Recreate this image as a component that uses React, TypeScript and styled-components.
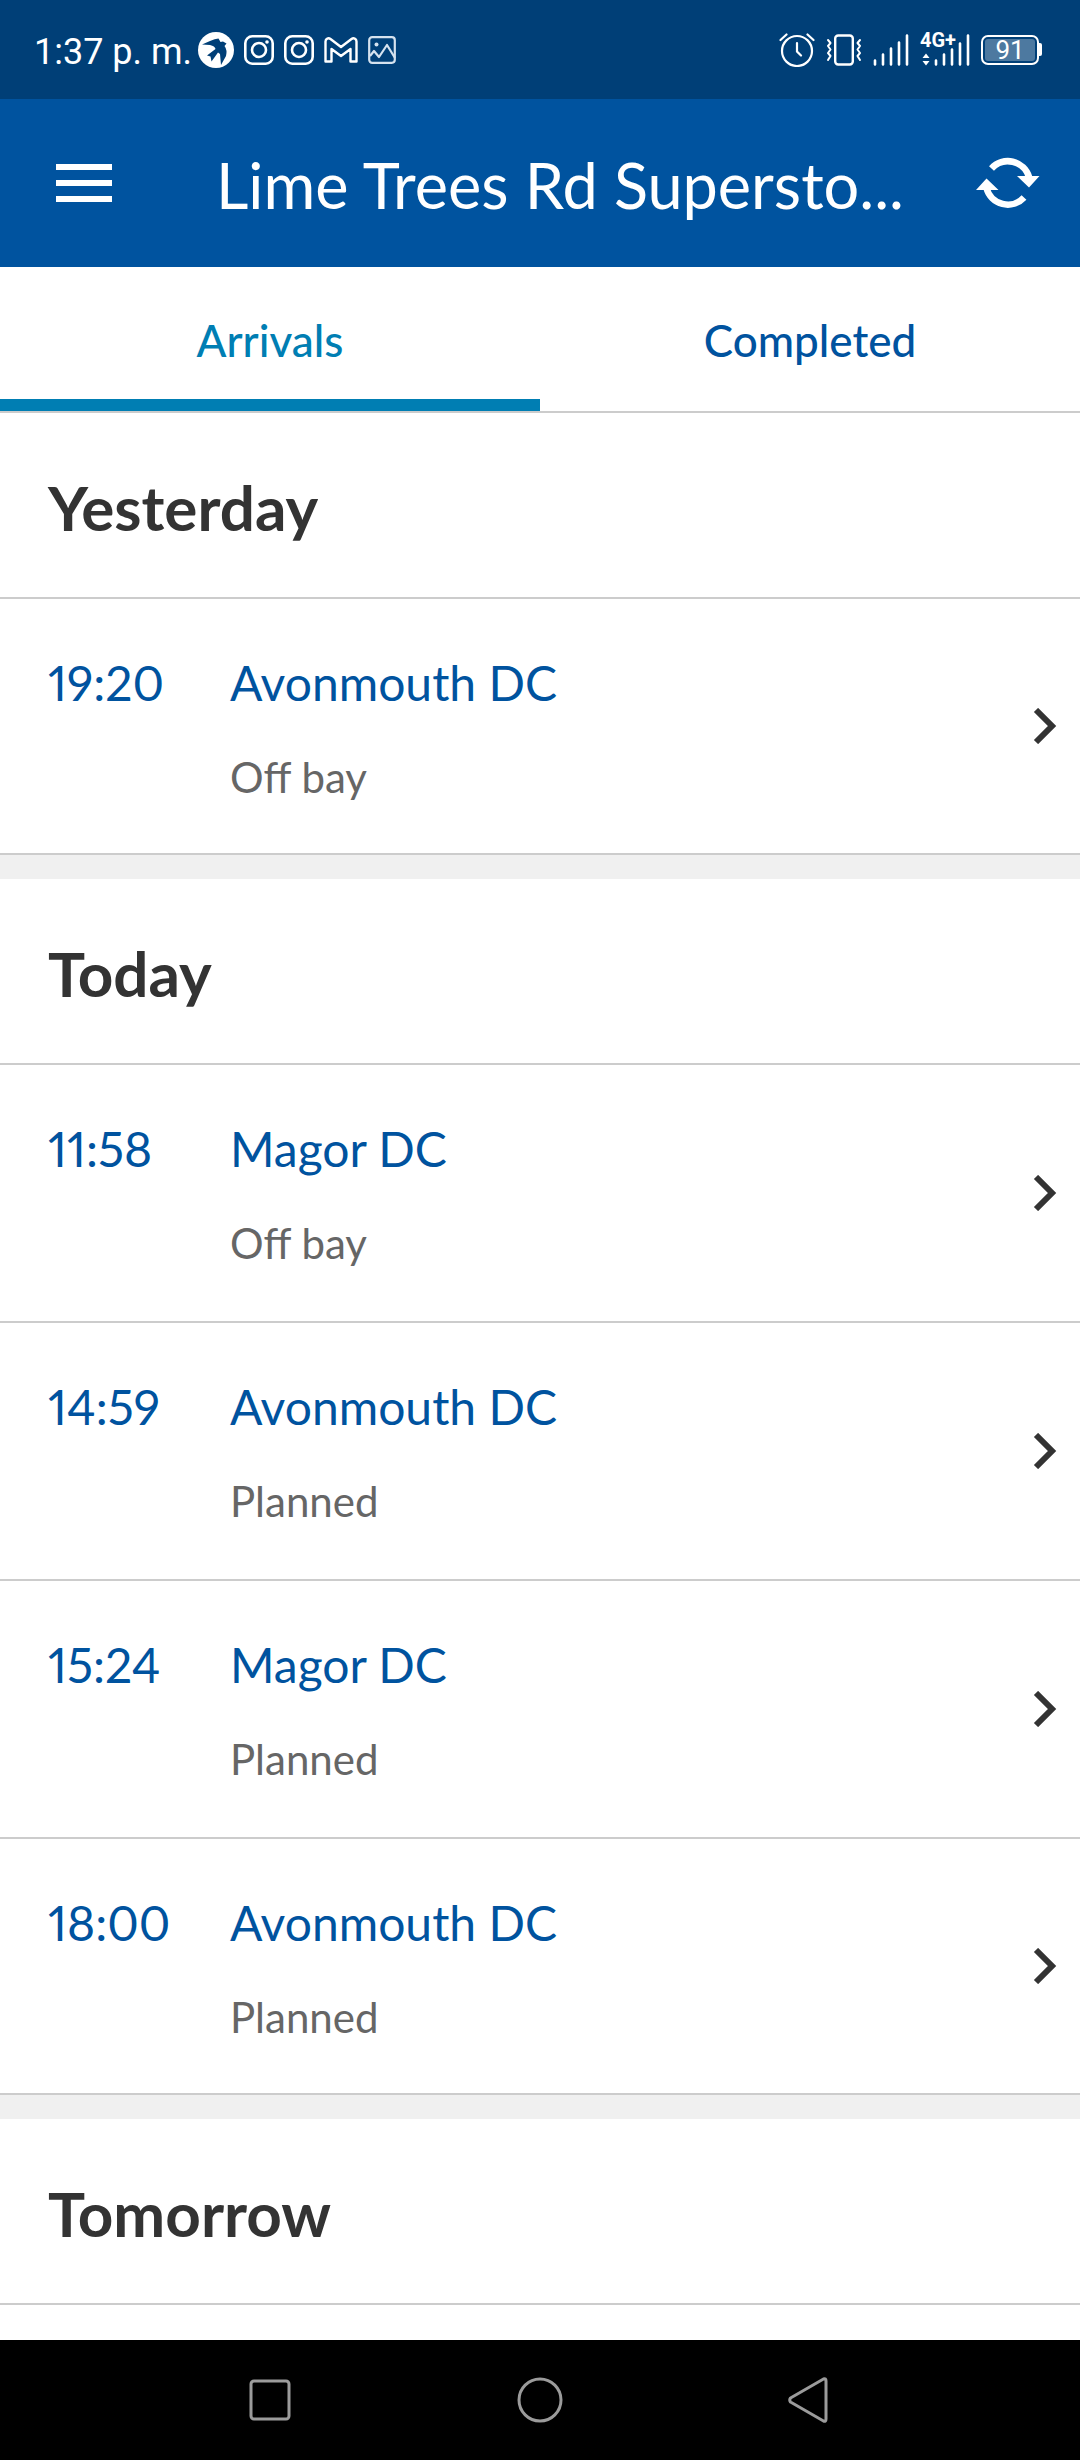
import React from 'react';
import styled, { createGlobalStyle } from 'styled-components';

const colors = {
  statusBar: '#003f77',
  brand: '#00539f',
  active: '#007eb3',
  ink: '#333333',
  muted: '#666666',
  line: '#cccccc',
  band: '#f0f0f0',
  navIcon: '#9b9b9b',
};

const GlobalStyle = createGlobalStyle`
  *, *::before, *::after { box-sizing: border-box; }
  body {
    margin: 0;
    background: #ffffff;
    font-family: Lato, "Liberation Sans", sans-serif;
  }
  svg { display: block; flex: none; }
`;

const Screen = styled.div`
  min-height: 100vh;
  display: flex;
  flex-direction: column;
  background: #ffffff;
`;

const StatusBar = styled.div`
  height: 99px;
  padding: 0 38px 0 34px;
  display: flex;
  align-items: center;
  justify-content: space-between;
  background: ${colors.statusBar};
  color: #ffffff;
  font-family: Roboto, sans-serif;
`;

const StatusGroup = styled.div<{ $gap: number }>`
  display: flex;
  align-items: center;
  gap: ${({ $gap }) => $gap}px;
`;

const Clock = styled.span`
  font-size: 36px;
  line-height: 42px;
  padding-top: 4px;
`;

const Network = styled.div`
  position: relative;
  display: flex;
  align-items: flex-end;
`;

const NetworkLabel = styled.span`
  position: absolute;
  left: 0;
  top: -4px;
  font-size: 20px;
  line-height: 20px;
  font-weight: 700;
`;

const Battery = styled.div`
  display: flex;
  align-items: center;
`;

const BatteryBody = styled.div`
  width: 58px;
  height: 30px;
  padding: 2px;
  border: 2px solid #ffffff;
  border-radius: 7px;
`;

const BatteryLevel = styled.div`
  height: 22px;
  border-radius: 3px;
  background: #4d79a0;
  font-size: 26px;
  line-height: 22px;
  text-align: center;
`;

const BatteryTip = styled.div`
  width: 3px;
  height: 13px;
  border-radius: 0 2px 2px 0;
  background: #ffffff;
`;

const AppBar = styled.header`
  height: 168px;
  padding: 0 40px 0 56px;
  display: flex;
  align-items: center;
  background: ${colors.brand};
  color: #ffffff;
`;

const IconButton = styled.button`
  padding: 0;
  border: 0;
  background: none;
  color: inherit;
`;

const Title = styled.h1`
  flex: 1;
  margin: 0;
  padding: 4px 32px 0 104px;
  font-size: 63px;
  line-height: 72px;
  font-weight: 400;
  white-space: nowrap;
`;

const Tabs = styled.div`
  display: flex;
  border-bottom: 2px solid ${colors.line};
`;

const Tab = styled.button<{ $active?: boolean }>`
  flex: 1;
  height: 144px;
  padding: 14px 0 0;
  border: 0;
  border-bottom: 12px solid ${({ $active }) => ($active ? colors.active : 'transparent')};
  background: none;
  color: ${({ $active }) => ($active ? colors.active : colors.brand)};
  font-family: inherit;
  font-size: 44px;
  line-height: 48px;
  font-weight: 500;
`;

const Content = styled.main`
  flex: 1;
`;

const Section = styled.section`
  & + & {
    border-top: 24px solid ${colors.band};
  }
`;

const SectionTitle = styled.h2`
  margin: 0;
  padding: 58px 48px 54px;
  border-bottom: 2px solid ${colors.line};
  color: ${colors.ink};
  font-size: 62px;
  line-height: 72px;
  font-weight: 700;
`;

const List = styled.ul`
  margin: 0;
  padding: 0;
  list-style: none;
`;

const Item = styled.li`
  height: 258px;
  border-bottom: 2px solid ${colors.line};
  &:last-child {
    height: 256px;
  }
`;

const RowLink = styled.a`
  height: 100%;
  padding: 0 23px 0 48px;
  display: grid;
  grid-template-columns: 182px 1fr auto;
  align-items: center;
  color: ${colors.brand};
  text-decoration: none;
  font-size: 48px;
  line-height: 60px;
`;

const Time = styled.span`
  align-self: start;
  padding-top: 54px;
  font-variant-numeric: proportional-nums;
`;

const Details = styled.span`
  align-self: start;
  padding-top: 54px;
  display: flex;
  flex-direction: column;
  gap: 36px;
`;

const Depot = styled.span`
  white-space: nowrap;
`;

const State = styled.span`
  color: ${colors.muted};
  font-size: 42px;
  line-height: 56px;
`;

const NavBar = styled.nav`
  height: 120px;
  padding: 0 12.5%;
  display: flex;
  background: #000000;
  color: ${colors.navIcon};
`;

const NavButton = styled(IconButton)`
  flex: 1;
  display: flex;
  align-items: center;
  justify-content: center;
`;

const BirdIcon = () => (
  <svg width="36" height="36" viewBox="0 0 36 36">
    <circle cx="18" cy="18" r="18" fill="#fff" />
    <path
      d="M4 12.5 12 9Q17 6.5 20.5 6.500L22.500 10 25 9.500 28.500 11.500 26.500 14Q29.500 18 28 24L23 33 22 22 20 20.500 13.500 29.500 12.500 24.500 9 23.500 17.500 17Q17 14 12 13Z"
      fill={colors.statusBar}
    />
  </svg>
);

const InstagramIcon = () => (
  <svg width="30" height="30" viewBox="0 0 30 30" fill="none" stroke="#fff" strokeWidth="2.6">
    <rect x="1.3" y="1.3" width="27.4" height="27.4" rx="7" />
    <circle cx="15" cy="15" r="7" />
    <circle cx="23" cy="7" r="1.8" fill="#fff" stroke="none" />
  </svg>
);

const MailIcon = () => (
  <svg width="34" height="26" viewBox="0 0 34 26" fill="none" stroke="#fff" strokeWidth="2.4" strokeLinejoin="round">
    <path d="M1.5 24.5V4.5C1.5 1.5 4.5.5 6.5 2L17 10 27.5 2C29.5.5 32.5 1.5 32.5 4.5V24.5H26.5V12L17 19 7.5 12V24.5Z" />
  </svg>
);

const PictureIcon = () => (
  <svg width="28" height="28" viewBox="0 0 28 28" fill="none" stroke="#d5e2ef" strokeWidth="2.2" strokeLinejoin="round">
    <rect x="1.2" y="1.2" width="25.6" height="25.6" rx="3" />
    <path d="M2 20 6 15 11 21 19 9 27 22" />
    <circle cx="8.5" cy="8.5" r="2" fill="#d5e2ef" stroke="none" />
  </svg>
);

const AlarmIcon = () => (
  <svg width="36" height="34" viewBox="0 0 36 34" fill="none" stroke="#fff" strokeWidth="2.2" strokeLinecap="round">
    <circle cx="18" cy="18" r="15" />
    <path d="M18 10V18.5L22 22.5M1.5 7 7.5 1.5M34.5 7 28.5 1.5" />
  </svg>
);

const VibrateIcon = () => (
  <svg width="36" height="32" viewBox="0 0 36 32" fill="none" stroke="#fff" strokeWidth="2.4" strokeLinejoin="round" strokeLinecap="round">
    <rect x="9.2" y="1.5" width="17.6" height="29" rx="3" />
    <path d="M2 6 4.5 9 2 12 4.5 15.5 2 19 4.5 22 2 26M34 6 31.5 9 34 12 31.5 15.5 34 19 31.5 22 34 26" strokeWidth="2" />
  </svg>
);

const SignalIcon = () => (
  <svg width="36" height="32" viewBox="0 0 36 32" stroke="#fff" strokeWidth="2.6" strokeLinecap="round">
    <path d="M2 26.5V30.5M10 20.5V30.5M18 14.5V30.5M26 8.5V30.5M34 1.5V30.5" />
  </svg>
);

const DataSignalIcon = () => (
  <svg width="50" height="32" viewBox="0 0 50 32" stroke="#fff" strokeWidth="2.6" strokeLinecap="round">
    <path d="M16 26.5V30.5M24 20.5V30.5M32 15.5V30.5M40 9.5V30.5M48 1.5V30.5" />
    <path d="M6 19.5 9.5 24H2.5ZM6 31.5 9.5 27H2.5Z" fill="#fff" stroke="none" />
  </svg>
);

const MenuIcon = () => (
  <svg width="56" height="38" viewBox="0 0 56 38" fill="currentColor">
    <path d="M0 0H56V6H0ZM0 16H56V22H0ZM0 32H56V38H0Z" />
  </svg>
);

const RefreshIcon = () => (
  <svg width="64" height="52" viewBox="0 0 64 52" fill="none" stroke="currentColor" strokeWidth="6.6">
    <path d="M15.5 11.5A22 22 0 0 1 53 20M48 40.5A22 22 0 0 1 10.5 31" />
    <path d="M41 19H63.5L53 30.5ZM22.5 33H0L10.5 21.5Z" fill="currentColor" stroke="none" />
  </svg>
);

const ChevronIcon = () => (
  <svg width="24" height="36" viewBox="0 0 24 36" fill="none" stroke={colors.ink} strokeWidth="6">
    <path d="M3 2 19 18 3 34" />
  </svg>
);

const SquareIcon = () => (
  <svg width="46" height="46" viewBox="0 0 46 46" fill="none" stroke="currentColor" strokeWidth="3">
    <rect x="4" y="4" width="38" height="38" rx="3" />
  </svg>
);

const CircleIcon = () => (
  <svg width="46" height="46" viewBox="0 0 46 46" fill="none" stroke="currentColor" strokeWidth="3">
    <circle cx="23" cy="23" r="21" />
  </svg>
);

const BackIcon = () => (
  <svg width="46" height="46" viewBox="0 0 46 46" fill="none" stroke="currentColor" strokeWidth="3" strokeLinejoin="round">
    <path d="M36.5 2Q39 1 39 4V42Q39 45 36.5 44L3.5 25Q2 23 3.5 21Z" />
  </svg>
);

interface Arrival {
  time: string;
  depot: string;
  state: string;
}

const days: { name: string; arrivals: Arrival[] }[] = [
  { name: 'Yesterday', arrivals: [{ time: '19:20', depot: 'Avonmouth DC', state: 'Off bay' }] },
  {
    name: 'Today',
    arrivals: [
      { time: '11:58', depot: 'Magor DC', state: 'Off bay' },
      { time: '14:59', depot: 'Avonmouth DC', state: 'Planned' },
      { time: '15:24', depot: 'Magor DC', state: 'Planned' },
      { time: '18:00', depot: 'Avonmouth DC', state: 'Planned' },
    ],
  },
  { name: 'Tomorrow', arrivals: [] },
];

const ArrivalRow = ({ time, depot, state }: Arrival) => (
  <Item>
    <RowLink href="#arrival">
      <Time>{time}</Time>
      <Details>
        <Depot>{depot}</Depot>
        <State>{state}</State>
      </Details>
      <ChevronIcon />
    </RowLink>
  </Item>
);

export default function App() {
  return (
    <Screen>
      <GlobalStyle />
      <StatusBar>
        <StatusGroup $gap={6}>
          <Clock>1:37 p. m.</Clock>
          <StatusGroup $gap={10}>
            <BirdIcon />
            <InstagramIcon />
            <InstagramIcon />
            <MailIcon />
            <PictureIcon />
          </StatusGroup>
        </StatusGroup>
        <StatusGroup $gap={11}>
          <AlarmIcon />
          <VibrateIcon />
          <SignalIcon />
          <Network>
            <NetworkLabel>4G+</NetworkLabel>
            <DataSignalIcon />
          </Network>
          <Battery>
            <BatteryBody>
              <BatteryLevel>91</BatteryLevel>
            </BatteryBody>
            <BatteryTip />
          </Battery>
        </StatusGroup>
      </StatusBar>
      <AppBar>
        <IconButton aria-label="Menu">
          <MenuIcon />
        </IconButton>
        <Title>Lime Trees Rd Supersto...</Title>
        <IconButton aria-label="Refresh">
          <RefreshIcon />
        </IconButton>
      </AppBar>
      <Tabs role="tablist">
        <Tab role="tab" aria-selected $active>
          Arrivals
        </Tab>
        <Tab role="tab" aria-selected={false}>
          Completed
        </Tab>
      </Tabs>
      <Content>
        {days.map((day) => (
          <Section key={day.name}>
            <SectionTitle>{day.name}</SectionTitle>
            <List>
              {day.arrivals.map((arrival) => (
                <ArrivalRow key={arrival.time} {...arrival} />
              ))}
            </List>
          </Section>
        ))}
      </Content>
      <NavBar>
        <NavButton aria-label="Recent apps">
          <SquareIcon />
        </NavButton>
        <NavButton aria-label="Home">
          <CircleIcon />
        </NavButton>
        <NavButton aria-label="Back">
          <BackIcon />
        </NavButton>
      </NavBar>
    </Screen>
  );
}
